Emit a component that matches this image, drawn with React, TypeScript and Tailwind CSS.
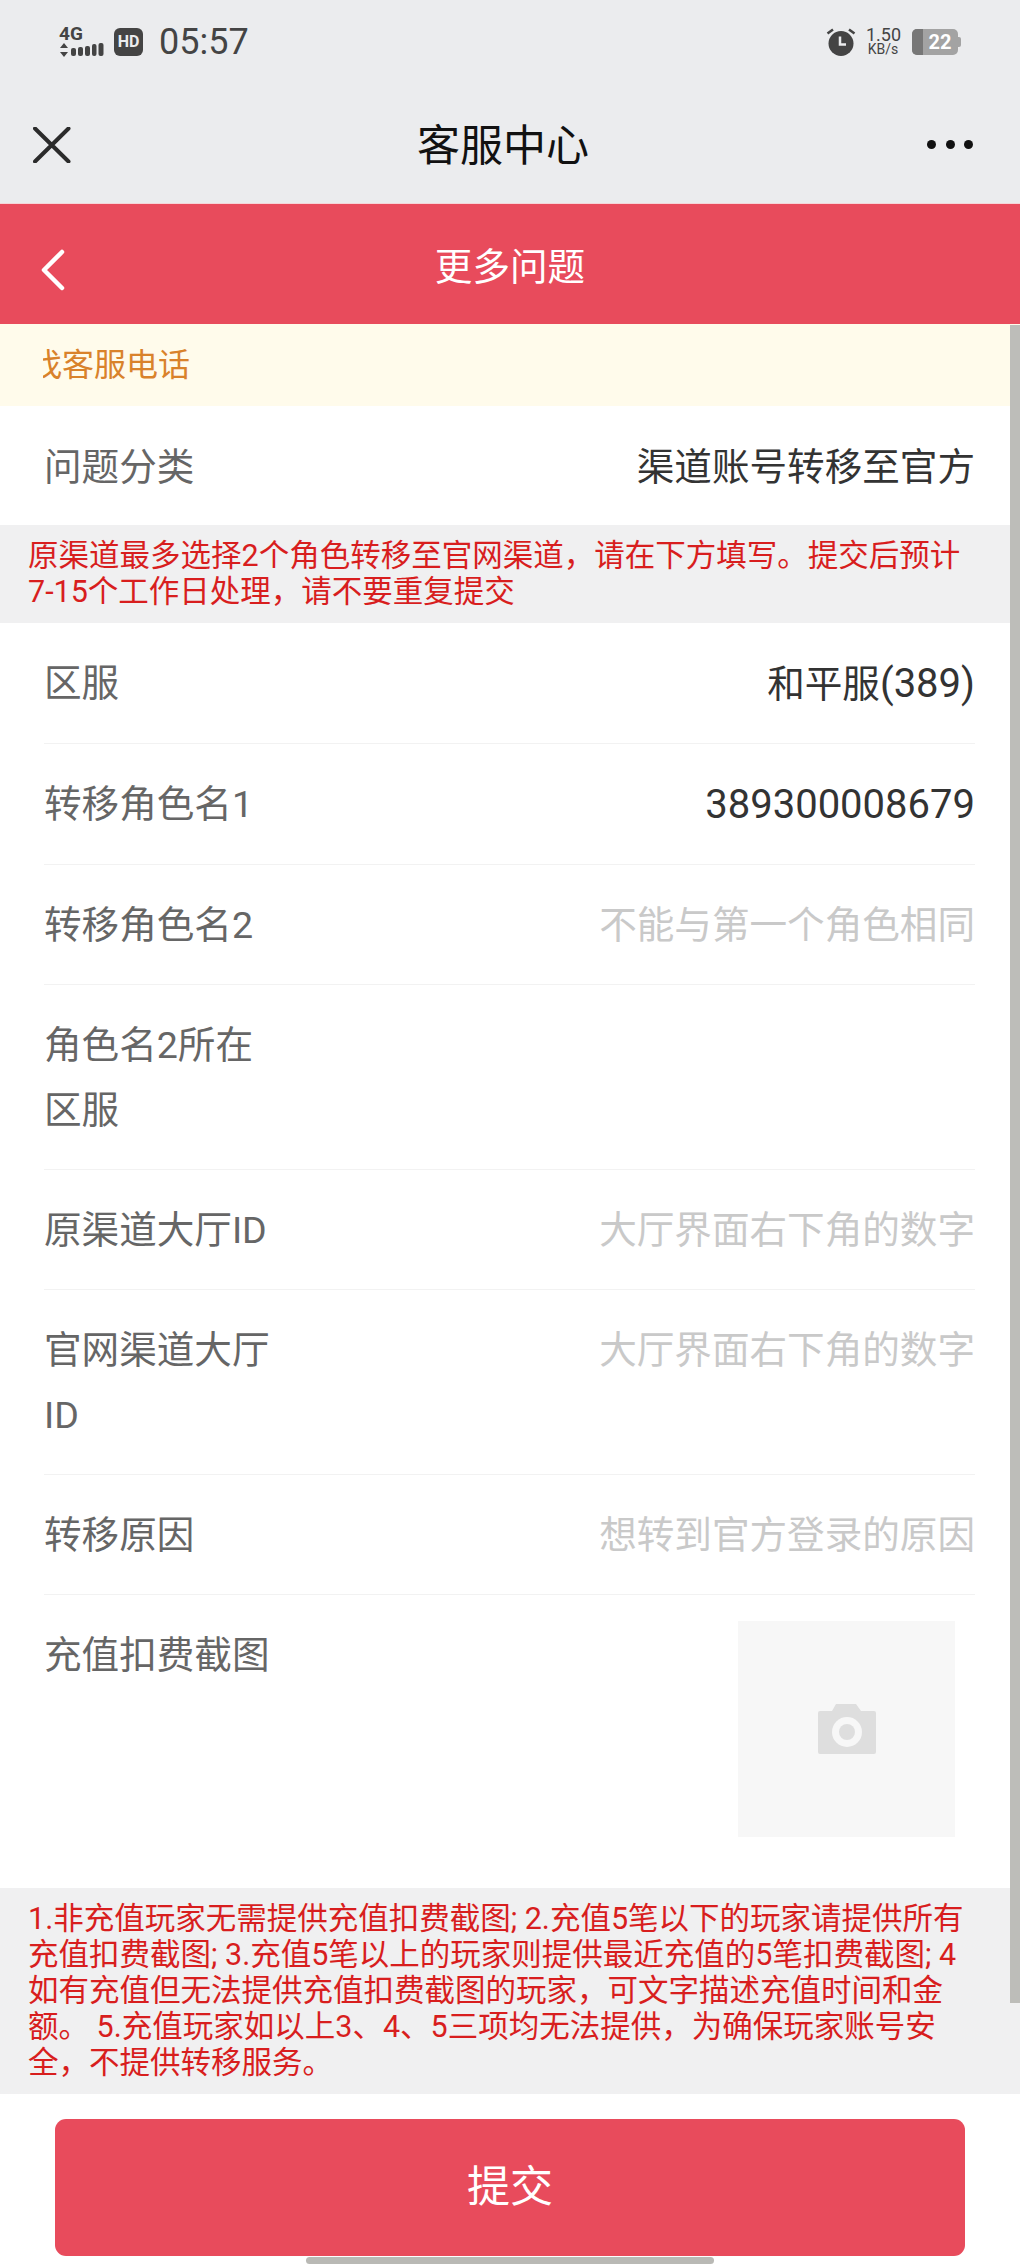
import React from 'react';

const FONT = "font-['Roboto','Noto_Sans_CJK_SC',sans-serif]";

type Row = {
  label: string;
  value?: React.ReactNode;
  placeholder?: string;
};

function FormRow({ label, value, placeholder }: Row) {
  return (
    <div className="flex justify-between border-b border-[#f2f2f2] pt-[28px] pb-[26px] text-[37.6px] leading-[65px]">
      <div className="w-[236px] shrink-0 text-[#666]">{label}</div>
      {value && <div className="text-[#333]">{value}</div>}
      {placeholder && <div className="text-[#c9c9c9]">{placeholder}</div>}
    </div>
  );
}

function Tip({ children }: { children: React.ReactNode }) {
  return (
    <div className="bg-[#f0f0f1] pl-[28px] pr-[49px] py-[13px] text-[30.5px] leading-[36px] text-[#d81e1e]">
      {children}
    </div>
  );
}

function StatusBar() {
  return (
    <div className="flex h-[82px] items-center justify-between pl-[59px] pr-[59px] pt-[1px] text-[#444]">
      <div className="flex items-center">
        <div className="w-[45px]">
          <div className="text-[19px] font-bold leading-[16px]">4G</div>
          <svg width="45" height="15" viewBox="0 0 45 15" fill="#444" className="mt-[1px]">
            <path d="M5 0l4 5H1zM5 14l4-5H1z" />
            <rect x="12" y="5" width="5" height="8" rx="2" />
            <rect x="19" y="4" width="5" height="9" rx="2" />
            <rect x="26" y="3" width="5" height="10" rx="2" />
            <rect x="33" y="1" width="4.500" height="12" rx="2" />
            <rect x="39.500" y="0" width="5" height="13" rx="2" />
          </svg>
        </div>
        <div className="ml-[10px] flex h-[28px] w-[29px] items-center justify-center rounded-[6px] bg-[#444] text-[16px] font-bold leading-none text-[#ebecee]">
          HD
        </div>
        <div className="ml-[16px] text-[36px] leading-[40px]">05:57</div>
      </div>
      <div className="flex items-center">
        <svg width="30" height="28" viewBox="0 0 30 28">
          <circle cx="15" cy="15.500" r="12.500" fill="#444" />
          <path d="M14 8.500v8h6" fill="none" stroke="#ebecee" strokeWidth="2.500" />
          <path d="M1.500 5.500L7 1.500M28.500 5.500L23 1.500" stroke="#444" strokeWidth="2.500" />
        </svg>
        <div className="ml-[10px] w-[34px] text-center">
          <div className="text-[18px] leading-[16px]">1.50</div>
          <div className="text-[14px] leading-[13px]">KB/s</div>
        </div>
        <div className="relative ml-[12px] flex h-[26px] w-[46px] items-center justify-center overflow-hidden rounded-[5px] bg-[#a3a3a3] pl-[10px] text-[20px] font-bold leading-none text-white">
          <div className="absolute inset-y-0 left-0 w-[11px] bg-[#777]" />
          <span className="relative">22</span>
        </div>
        <div className="h-[10px] w-[3px] rounded-r-[2px] bg-[#a3a3a3]" />
      </div>
    </div>
  );
}

function NavBar() {
  return (
    <div className="flex h-[122px] items-start justify-between border-b border-[#f5d5d8] bg-[#ebecee] pl-[33px] pr-[47px] pt-[45px]">
      <svg width="38" height="36" viewBox="0 0 38 36" fill="none" stroke="#2b2b2b" strokeWidth="4" strokeLinecap="round">
        <path d="M2 1.500l33.500 33M35.500 1.500L2 34.500" />
      </svg>
      <div className="ml-[8px] text-[43px] leading-[38px] text-[#111]">客服中心</div>
      <div className="flex h-[34px] w-[46px] items-center justify-between">
        <div className="h-[9px] w-[9px] rounded-full bg-[#111]" />
        <div className="h-[9px] w-[9px] rounded-full bg-[#111]" />
        <div className="h-[9px] w-[9px] rounded-full bg-[#111]" />
      </div>
    </div>
  );
}

function Header() {
  return (
    <div className="relative flex h-[120px] items-center justify-center bg-[#e84b5c] pt-[7px] text-[37.6px] text-white">
      <svg className="absolute left-[41px] top-[45px]" width="24" height="42" viewBox="0 0 24 42" fill="none" stroke="#fff" strokeWidth="4.500" strokeLinecap="round" strokeLinejoin="round">
        <path d="M21 3L3 21l18 18" />
      </svg>
      更多问题
    </div>
  );
}

export default function App() {
  return (
    <div className={`relative h-[2267px] w-[1020px] overflow-hidden bg-white ${FONT}`}>
      <div className="bg-[#ebecee]">
        <StatusBar />
        <NavBar />
      </div>
      <Header />

      {/* Notice, scrolled so the first char is cut off */}
      <div className="flex h-[82px] items-center bg-[#fffbeb] pl-[43px]">
        <div className="overflow-hidden">
          <div className="-ml-[13px] text-[32px] text-[#d9822b]">找客服电话</div>
        </div>
      </div>

      <div className="pl-[44px] pr-[45px]">
        <div className="flex h-[119px] items-center justify-between pt-[3px] text-[37.6px]">
          <div className="text-[#666]">问题分类</div>
          <div className="text-[#333]">渠道账号转移至官方</div>
        </div>
      </div>

      <Tip>原渠道最多选择2个角色转移至官网渠道，请在下方填写。提交后预计7-15个工作日处理，请不要重复提交</Tip>

      <div className="pl-[44px] pr-[45px]">
        <FormRow label="区服" value={<>和平服<span className="text-[40px]">(389)</span></>} />
        <FormRow label="转移角色名1" value={<span className="text-[40px]">389300008679</span>} />
        <FormRow label="转移角色名2" placeholder="不能与第一个角色相同" />
        <FormRow label="角色名2所在区服" />
        <FormRow label="原渠道大厅ID" placeholder="大厅界面右下角的数字" />
        <FormRow label="官网渠道大厅ID" placeholder="大厅界面右下角的数字" />
        <FormRow label="转移原因" placeholder="想转到官方登录的原因" />
        <div className="flex h-[293px] justify-between pr-[20px] pt-[26px] text-[37.6px] leading-[65px]">
          <div className="pt-[2px] text-[#666]">充值扣费截图</div>
          <div className="flex h-[216px] w-[217px] items-center justify-center bg-[#f7f7f7]">
            <svg width="60" height="52" viewBox="0 0 60 52">
              <path d="M1 10a2 2 0 0 1 2-2h12l4-7h20l5 7h13a2 2 0 0 1 2 2v39a2 2 0 0 1-2 2H3a2 2 0 0 1-2-2z" fill="#dedede" />
              <circle cx="30" cy="29" r="15" fill="#f7f7f7" />
              <circle cx="30" cy="29" r="8" fill="#dedede" />
            </svg>
          </div>
        </div>
      </div>

      <Tip>1.非充值玩家无需提供充值扣费截图; 2.充值5笔以下的玩家请提供所有充值扣费截图; 3.充值5笔以上的玩家则提供最近充值的5笔扣费截图; 4如有充值但无法提供充值扣费截图的玩家，可文字描述充值时间和金额。 5.充值玩家如以上3、4、5三项均无法提供，为确保玩家账号安全，不提供转移服务。</Tip>

      <div className="px-[55px] pt-[25px]">
        <div className="flex h-[137px] items-center justify-center rounded-[11px] bg-[#e84b5c] text-[43px] text-white">提交</div>
      </div>

      {/* scrollbars */}
      <div className="absolute right-0 top-[325px] h-[1678px] w-[10px] bg-[#bdbdb9]" />
      <div className="absolute bottom-[3px] left-[306px] h-[7px] w-[408px] rounded-full bg-[#b9b9b5]" />
    </div>
  );
}
